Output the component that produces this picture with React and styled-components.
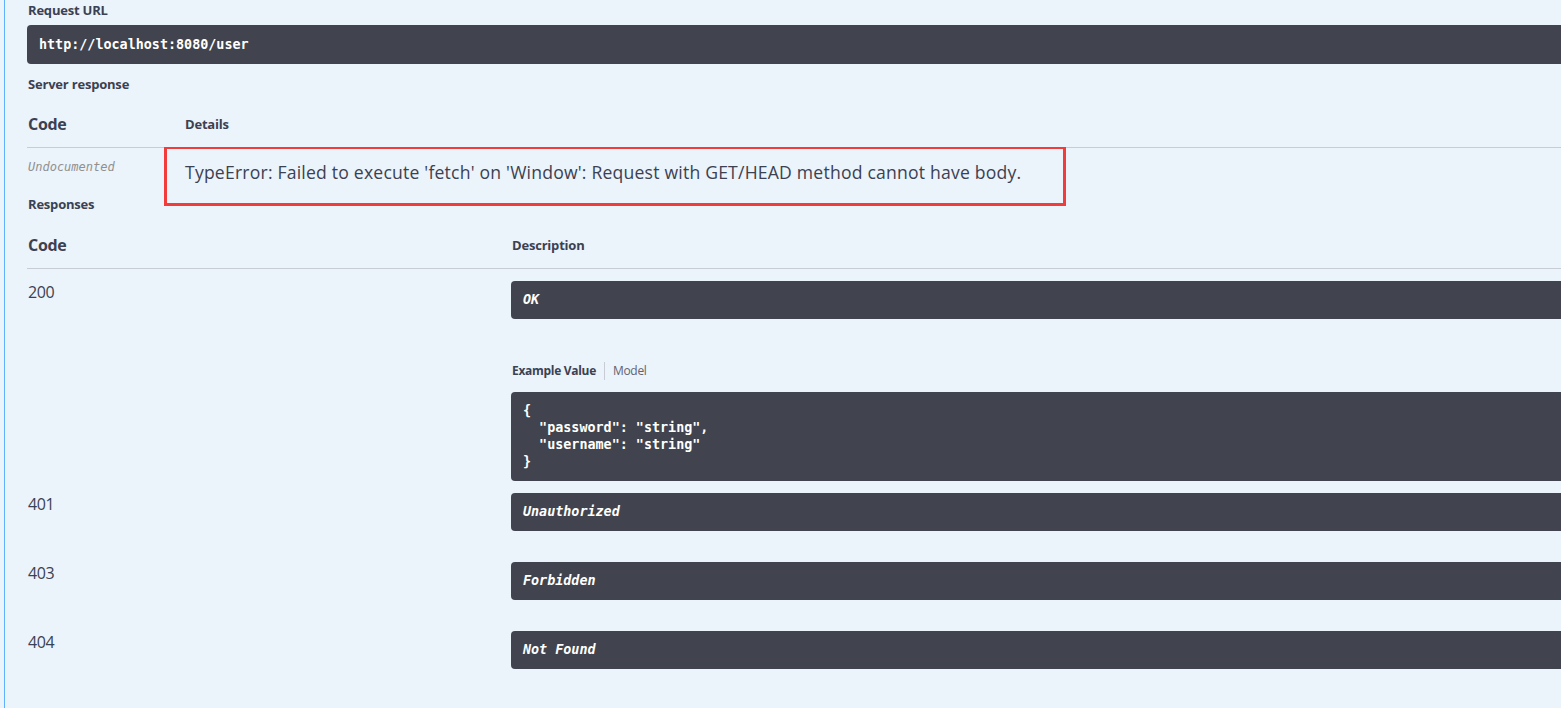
import React from 'react';
import styled, { createGlobalStyle } from 'styled-components';

const GlobalStyle = createGlobalStyle`
  html, body {
    margin: 0;
    padding: 0;
    background: #ebf3fb;
    overflow: hidden;
  }
  body {
    font-family: "Open Sans", "Noto Sans", sans-serif;
    color: #3b4151;
  }
`;

const responses = [
  { code: '200', text: 'OK', example: true },
  { code: '401', text: 'Unauthorized' },
  { code: '403', text: 'Forbidden' },
  { code: '404', text: 'Not Found' },
];

function App() {
  return (
    <>
      <GlobalStyle />
      <Page>
        <Panel>
          <Label>Request URL</Label>
          <Dark>
            <Url>http://localhost:8080/user</Url>
          </Dark>
          <Label top="11px">Server response</Label>
          <Table code="157px">
            <HeadRow>
              <HeadCode>Code</HeadCode>
              <HeadCell>Details</HeadCell>
            </HeadRow>
            <BodyRow pad="10px" bottom="0">
              <Undoc>Undocumented</Undoc>
              <Details>
                <ErrorText>
                  TypeError: Failed to execute 'fetch' on 'Window': Request with GET/HEAD method cannot have body.
                </ErrorText>
                <Highlight />
              </Details>
            </BodyRow>
          </Table>
          <Label top="10px" bottom="7px">Responses</Label>
          <Table code="484px">
            <HeadRow>
              <HeadCode>Code</HeadCode>
              <HeadCell>Description</HeadCell>
            </HeadRow>
            {responses.map(r => (
              <BodyRow key={r.code} pad="12px" bottom={r.example ? '0' : '19px'}>
                <CodeCell>{r.code}</CodeCell>
                <div>
                  <Dark>
                    <Desc>{r.text}</Desc>
                  </Dark>
                  {r.example && (
                    <>
                      <Tabs>
                        <Tab active>Example Value</Tab>
                        <Tab>Model</Tab>
                      </Tabs>
                      <Dark>
                        <Pre>{`{
  "password": "string",
  "username": "string"
}`}</Pre>
                      </Dark>
                    </>
                  )}
                </div>
              </BodyRow>
            ))}
          </Table>
        </Panel>
      </Page>
    </>
  );
}

const Page = styled.div`
  height: 708px;
  padding-left: 4px;
`;

const Panel = styled.div`
  height: 100%;
  border-left: 1px solid #61affe;
  padding-left: 22px;
  padding-top: 1px;
`;

const Label = styled.div`
  font-size: 13px;
  font-weight: 700;
  line-height: 18px;
  margin-top: ${props => props.top || '0'};
  margin-bottom: ${props => props.bottom || '6px'};
  padding-left: 1px;
  letter-spacing: -0.2px;
`;

const Dark = styled.div`
  background: #41444e;
  border-radius: 4px 0 0 4px;
  color: #fff;
  padding: 10px 12px;
`;

const Url = styled.div`
  font-family: "DejaVu Sans Mono", monospace;
  font-size: 13.4px;
  font-weight: 700;
  line-height: 19px;
`;

const Table = styled.div`
  --code: ${props => props.code};
`;

const HeadRow = styled.div`
  display: grid;
  grid-template-columns: var(--code) 1fr;
  align-items: center;
  height: 49px;
  padding-top: 1px;
  box-sizing: border-box;
  border-bottom: 1px solid #c8ccd4;
`;

const HeadCode = styled.div`
  font-size: 16px;
  font-weight: 700;
  letter-spacing: -0.3px;
  padding-left: 1px;
`;

const HeadCell = styled.div`
  font-size: 13px;
  font-weight: 700;
  letter-spacing: -0.2px;
  padding-left: 1px;
`;

const BodyRow = styled.div`
  display: grid;
  grid-template-columns: var(--code) 1fr;
  padding-top: ${props => props.pad};
  padding-bottom: ${props => props.bottom};
`;

const Undoc = styled.div`
  font-family: "DejaVu Sans Mono", monospace;
  font-style: italic;
  font-size: 12px;
  color: #909090;
  line-height: 18px;
  padding-left: 1px;
`;

const Details = styled.div`
  position: relative;
`;

const ErrorText = styled.div`
  font-size: 17.6px;
  line-height: 26px;
  margin-top: 1px;
  padding-left: 1px;
  letter-spacing: 0.2px;
`;

const Highlight = styled.div`
  position: absolute;
  left: -20px;
  top: -11px;
  width: 902px;
  height: 59px;
  box-sizing: border-box;
  border: 3px solid #f23c3c;
  border-top-width: 2px;
  pointer-events: none;
`;

const CodeCell = styled.div`
  font-size: 16px;
  line-height: 22px;
  letter-spacing: -0.4px;
  padding-left: 1px;
`;

const Desc = styled.div`
  font-family: "DejaVu Sans Mono", monospace;
  font-style: italic;
  font-weight: 700;
  font-size: 13.4px;
  line-height: 18px;
`;

const Tabs = styled.div`
  display: flex;
  align-items: center;
  margin-top: 43px;
  margin-bottom: 12px;
  height: 18px;
`;

const Tab = styled.div`
  font-size: 12px;
  font-weight: ${props => (props.active ? 700 : 400)};
  color: ${props => (props.active ? '#3b4151' : '#606470')};
  letter-spacing: -0.3px;
  padding: ${props => (props.active ? '0 8px 0 1px' : '0 0 0 8px')};
  border-left: ${props => (props.active ? 'none' : '1px solid #c8ccd4')};
  line-height: 18px;
`;

const Pre = styled.pre`
  margin: 0;
  font-family: "DejaVu Sans Mono", monospace;
  font-weight: 700;
  font-size: 13.4px;
  line-height: 17px;
  padding-bottom: 1px;
`;

export default App;
